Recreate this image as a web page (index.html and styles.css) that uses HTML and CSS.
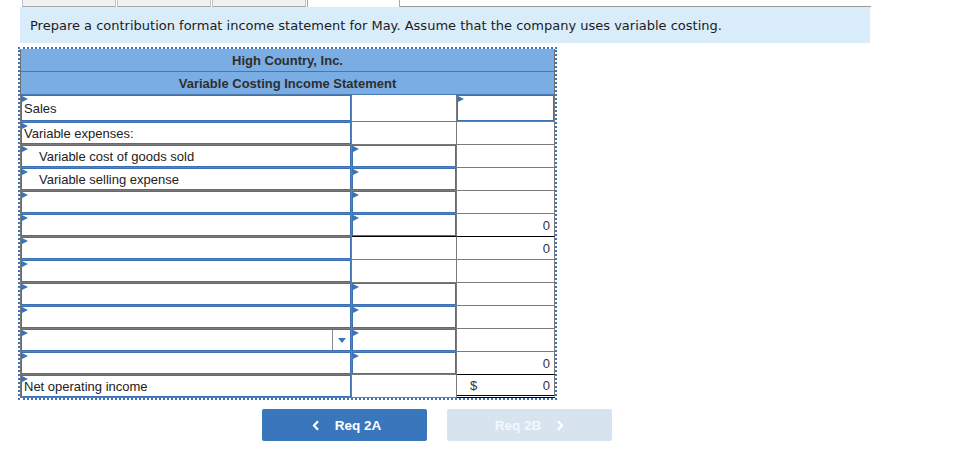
FILE: index.html
```html
<!DOCTYPE html>
<html>
<head>
<meta charset="utf-8">
<link rel="stylesheet" href="styles.css">
</head>
<body>
<div class="page">
  <div class="tabs">
    <div class="tab"></div>
    <div class="tab"></div>
    <div class="tab"></div>
    <div class="tab active"></div>
    <div class="tabline"></div>
  </div>
  <div class="prompt">Prepare a contribution format income statement for May. Assume that the company uses variable costing.</div>
  <div class="sheet">
    <div class="grid">
      <div class="hdr h1">High Country, Inc.</div>
      <div class="hdr h2">Variable Costing Income Statement</div>

      <div class="c c1"><div class="inp"><i class="flag"></i><span class="lbl">Sales</span></div></div>
      <div class="c c2"></div>
      <div class="c c3"><div class="inp"><i class="flag"></i></div></div>

      <div class="c c1"><div class="inp"><i class="flag"></i><span class="lbl">Variable expenses:</span></div></div>
      <div class="c c2"></div>
      <div class="c c3"></div>

      <div class="c c1"><div class="inp"><i class="flag"></i><span class="lbl ind">Variable cost of goods sold</span></div></div>
      <div class="c c2"><div class="inp"><i class="flag"></i></div></div>
      <div class="c c3"></div>

      <div class="c c1"><div class="inp"><i class="flag"></i><span class="lbl ind">Variable selling expense</span></div></div>
      <div class="c c2"><div class="inp"><i class="flag"></i></div></div>
      <div class="c c3"></div>

      <div class="c c1"><div class="inp"><i class="flag"></i></div></div>
      <div class="c c2"><div class="inp"><i class="flag"></i></div></div>
      <div class="c c3"></div>

      <div class="c c1"><div class="inp"><i class="flag"></i></div></div>
      <div class="c c2 bb"><div class="inp"><i class="flag"></i></div></div>
      <div class="c c3 bb"><span class="num">0</span></div>

      <div class="c c1"><div class="inp"><i class="flag"></i></div></div>
      <div class="c c2"></div>
      <div class="c c3"><span class="num">0</span></div>

      <div class="c c1"><div class="inp"><i class="flag"></i></div></div>
      <div class="c c2"></div>
      <div class="c c3"></div>

      <div class="c c1"><div class="inp"><i class="flag"></i></div></div>
      <div class="c c2"><div class="inp"><i class="flag"></i></div></div>
      <div class="c c3"></div>

      <div class="c c1"><div class="inp"><i class="flag"></i></div></div>
      <div class="c c2"><div class="inp"><i class="flag"></i></div></div>
      <div class="c c3"></div>

      <div class="c c1"><div class="inp sel"><i class="flag"></i><span class="selbtn"><i class="caret"></i></span></div></div>
      <div class="c c2"><div class="inp"><i class="flag"></i></div></div>
      <div class="c c3"></div>

      <div class="c c1"><div class="inp"><i class="flag"></i></div></div>
      <div class="c c2"><div class="inp"><i class="flag"></i></div></div>
      <div class="c c3 bb"><span class="num">0</span></div>

      <div class="c c1"><div class="inp"><i class="flag"></i><span class="lbl">Net operating income</span></div></div>
      <div class="c c2"></div>
      <div class="c c3 dbl"><span class="cur">$</span><span class="num">0</span></div>
    </div>
  </div>
  <div class="nav">
    <button class="btn prev"><svg width="8" height="11" viewBox="0 0 8 11"><path d="M6 1.2 L2 5.5 L6 9.8" fill="none" stroke="#fff" stroke-width="2.2"/></svg><span>Req 2A</span></button>
    <button class="btn next"><span>Req 2B</span><svg width="8" height="11" viewBox="0 0 8 11"><path d="M2 1.2 L6 5.5 L2 9.8" fill="none" stroke="#fff" stroke-width="2.2"/></svg></button>
  </div>
</div>
</body>
</html>
```

FILE: styles.css
```css
* { box-sizing: border-box; }
html, body { margin: 0; padding: 0; background: #fff; }
body { font-family: "Liberation Sans", Arial, sans-serif; color: #222; }

.page { padding-left: 18px; }

.tabs { display: flex; height: 7px; padding-left: 4px; }
.tab {
  width: 94px; height: 7px; margin-right: 1px;
  background: #f1f1f1;
  border: 1px solid #c4c4c4; border-top: none; border-bottom: 1px solid #a8a8a8;
}
.tab.active { width: 93px; background: #fff; border-color: #a8a8a8; border-bottom: none; margin-right: 0; }
.tabline { width: 471px; height: 7px; border-bottom: 1px solid #999; }

.prompt {
  margin-left: 2px; width: 850px; height: 36px;
  background: #d9ecf9;
  padding-left: 10px;
  display: flex; align-items: center;
  font-family: "DejaVu Sans", Verdana, sans-serif; font-size: 13px; color: #1c1c1c;
}

.sheet {
  margin-top: 4px;
  width: 539px;
  border: 2px dotted #3b74ba;
}
.grid {
  display: grid;
  grid-template-columns: 332px 105px 98px;
  grid-template-rows: 23px 23px 27px;
  grid-auto-rows: 23px;
  font-size: 13px;
}
.hdr {
  grid-column: 1 / 4;
  background: #7aade3;
  border-left: 1px solid #6f6f6f; border-right: 1px solid #6f6f6f;
  border-bottom: 1px solid #6f6f6f;
  display: flex; align-items: center; justify-content: center;
  font-weight: bold; color: #2e2e2e;
}
.hdr.h2 { border-bottom: 1px solid #4a78b0; }

.c {
  border-right: 1px solid #7a7a7a;
  border-bottom: 1px solid #7a7a7a;
  display: flex; align-items: stretch;
  position: relative;
}
.c1 { border-left: 1px solid #7a7a7a; }

.bb { border-bottom-color: #000; }
.dbl { border-bottom: 3px double #000; }

.inp {
  flex: 1;
  border: 1px solid #3d72b4;
  position: relative;
  display: flex; align-items: center;
}
.flag {
  position: absolute; left: 0; top: 0;
  width: 0; height: 0;
  border-left: 6px solid #3b74ba;
  border-top: 3.5px solid transparent;
  border-bottom: 3.5px solid transparent;
}
.lbl { padding-left: 2px; color: #222; }
.lbl.ind { padding-left: 17px; }

.sel { justify-content: flex-end; }
.selbtn {
  width: 18px; height: 100%;
  border-left: 1px solid #8a8a8a;
  display: flex; align-items: center; justify-content: center;
}
.caret {
  width: 0; height: 0;
  border-top: 5px solid #3b74ba;
  border-left: 4.5px solid transparent;
  border-right: 4.5px solid transparent;
}

.num { margin-left: auto; padding-right: 4px; color: #333; align-self: center; }
.cur { padding-left: 13px; color: #333; align-self: center; }

.nav {
  display: flex; gap: 20px;
  padding-left: 244px;
  margin-top: 9px;
}
.btn {
  width: 165px; height: 32px;
  border: none; border-radius: 2px;
  display: flex; align-items: center; justify-content: center; gap: 15px;
  font-family: "Liberation Sans", Arial, sans-serif; font-weight: bold; font-size: 13.5px;
  color: #fff; padding: 0;
}
.btn.prev { background: #3a76bb; padding-left: 4px; }
.btn.next { background: #d8e3f0; color: #f4f7fb; }
```
